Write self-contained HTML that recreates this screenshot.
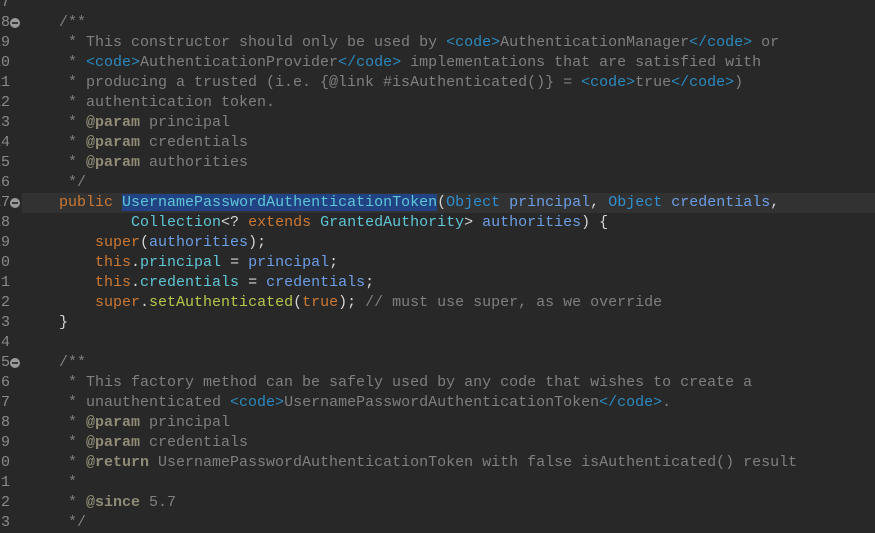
<!DOCTYPE html>
<html><head><meta charset="utf-8"><style>
html,body{margin:0;padding:0;width:875px;height:518px;overflow:hidden;background:#282828;}
.r{position:absolute;left:0;width:875px;height:20px;line-height:20px;font-family:"Liberation Mono",monospace;font-size:15px;white-space:pre;color:#d4d4d4;}
.n{position:absolute;right:865px;color:#8a8a8a;}
.x{position:absolute;left:23px;}
.fold{position:absolute;left:10px;top:5px;width:10px;height:10px;border-radius:50%;background:#9a9a9a;}
.fold:after{content:"";position:absolute;left:2px;top:4px;width:6px;height:2px;background:#3a3a3a;}
.c{color:#7f7f7f}.t{color:#2a8abf}.k{color:#cc7832}.b{color:#8f8b75;font-weight:bold}
.ty{color:#5ec6d6}.ob{color:#2f8fd0}.p{color:#6c9ee6}.fd{color:#5ec6d6}.m{color:#b8c64a}
.sel{background:#214283}
.hl{position:absolute;left:22px;top:193px;width:853px;height:20px;background:#323232;}
</style></head><body>
<div class="hl"></div>
<div class="r" style="top:-7px"><span class="n">7</span></div>
<div class="r" style="top:13px"><span class="n">8</span><span class="fold"></span><span class="x c">    /**</span></div>
<div class="r" style="top:33px"><span class="n">19</span><span class="x c">     * This constructor should only be used by <span class="t">&lt;code&gt;</span>AuthenticationManager<span class="t">&lt;/code&gt;</span> or</span></div>
<div class="r" style="top:53px"><span class="n">10</span><span class="x c">     * <span class="t">&lt;code&gt;</span>AuthenticationProvider<span class="t">&lt;/code&gt;</span> implementations that are satisfied with</span></div>
<div class="r" style="top:73px"><span class="n">11</span><span class="x c">     * producing a trusted (i.e. {@link #isAuthenticated()} = <span class="t">&lt;code&gt;</span>true<span class="t">&lt;/code&gt;</span>)</span></div>
<div class="r" style="top:93px"><span class="n">12</span><span class="x c">     * authentication token.</span></div>
<div class="r" style="top:113px"><span class="n">13</span><span class="x c">     * <span class="b">@param</span> principal</span></div>
<div class="r" style="top:133px"><span class="n">14</span><span class="x c">     * <span class="b">@param</span> credentials</span></div>
<div class="r" style="top:153px"><span class="n">15</span><span class="x c">     * <span class="b">@param</span> authorities</span></div>
<div class="r" style="top:173px"><span class="n">16</span><span class="x c">     */</span></div>
<div class="r" style="top:193px"><span class="n">17</span><span class="fold"></span><span class="x">    <span class="k">public</span> <span class="sel ty">UsernamePasswordAuthenticationToken</span>(<span class="ob">Object</span> <span class="p">principal</span>, <span class="ob">Object</span> <span class="p">credentials</span>,</span></div>
<div class="r" style="top:213px"><span class="n">18</span><span class="x">            <span class="ty">Collection</span>&lt;? <span class="k">extends</span> <span class="ty">GrantedAuthority</span>&gt; <span class="p">authorities</span>) {</span></div>
<div class="r" style="top:233px"><span class="n">19</span><span class="x">        <span class="k">super</span>(<span class="p">authorities</span>);</span></div>
<div class="r" style="top:253px"><span class="n">20</span><span class="x">        <span class="k">this</span>.<span class="fd">principal</span> = <span class="p">principal</span>;</span></div>
<div class="r" style="top:273px"><span class="n">21</span><span class="x">        <span class="k">this</span>.<span class="fd">credentials</span> = <span class="p">credentials</span>;</span></div>
<div class="r" style="top:293px"><span class="n">22</span><span class="x">        <span class="k">super</span>.<span class="m">setAuthenticated</span>(<span class="k">true</span>); <span class="c">// must use super, as we override</span></span></div>
<div class="r" style="top:313px"><span class="n">23</span><span class="x">    }</span></div>
<div class="r" style="top:333px"><span class="n">24</span></div>
<div class="r" style="top:353px"><span class="n">25</span><span class="fold"></span><span class="x c">    /**</span></div>
<div class="r" style="top:373px"><span class="n">26</span><span class="x c">     * This factory method can be safely used by any code that wishes to create a</span></div>
<div class="r" style="top:393px"><span class="n">27</span><span class="x c">     * unauthenticated <span class="t">&lt;code&gt;</span>UsernamePasswordAuthenticationToken<span class="t">&lt;/code&gt;</span>.</span></div>
<div class="r" style="top:413px"><span class="n">28</span><span class="x c">     * <span class="b">@param</span> principal</span></div>
<div class="r" style="top:433px"><span class="n">29</span><span class="x c">     * <span class="b">@param</span> credentials</span></div>
<div class="r" style="top:453px"><span class="n">30</span><span class="x c">     * <span class="b">@return</span> UsernamePasswordAuthenticationToken with false isAuthenticated() result</span></div>
<div class="r" style="top:473px"><span class="n">31</span><span class="x c">     *</span></div>
<div class="r" style="top:493px"><span class="n">32</span><span class="x c">     * <span class="b">@since</span> 5.7</span></div>
<div class="r" style="top:513px"><span class="n">33</span><span class="x c">     */</span></div>
</body></html>
